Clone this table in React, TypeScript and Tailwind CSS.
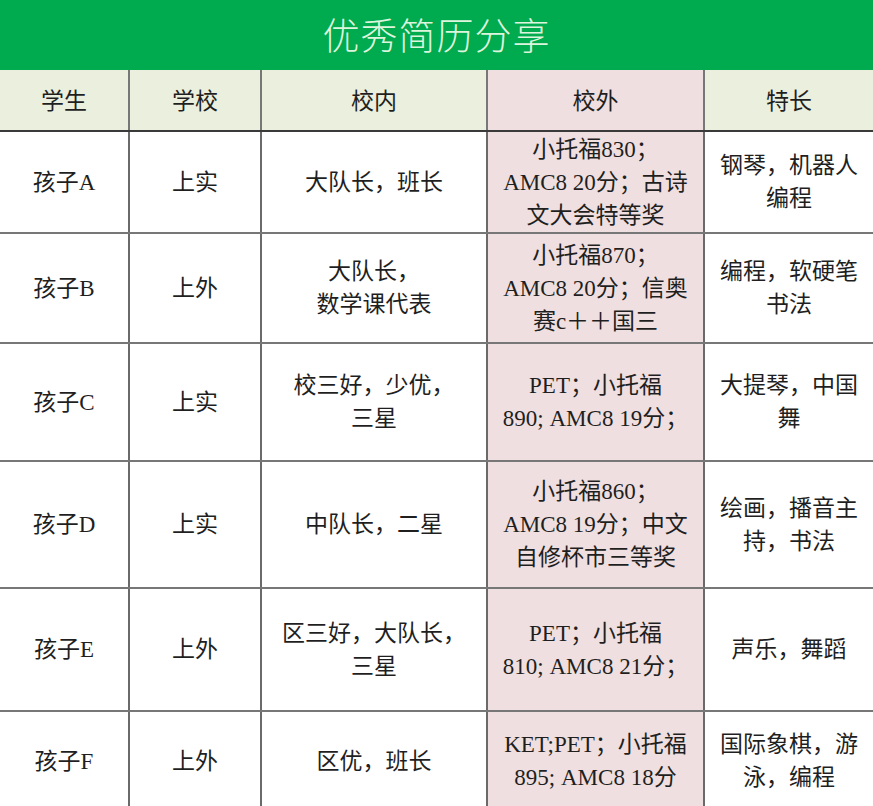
import React from "react";

const rows: { h: string; cells: React.ReactNode[] }[] = [
  {
    h: "h-[102px]",
    cells: [
      "孩子A",
      "上实",
      "大队长，班长",
      <>小托福830；<br />AMC8 20分；古诗<br />文大会特等奖</>,
      <>钢琴，机器人<br />编程</>,
    ],
  },
  {
    h: "h-[110px]",
    cells: [
      "孩子B",
      "上外",
      <>大队长，<br />数学课代表</>,
      <>小托福870；<br />AMC8 20分；信奥<br />赛c＋＋国三</>,
      <>编程，软硬笔<br />书法</>,
    ],
  },
  {
    h: "h-[118px]",
    cells: [
      "孩子C",
      "上实",
      <>校三好，少优，<br />三星</>,
      <>PET；小托福<br />890; AMC8 19分；</>,
      <>大提琴，中国<br />舞</>,
    ],
  },
  {
    h: "h-[127px]",
    cells: [
      "孩子D",
      "上实",
      "中队长，二星",
      <>小托福860；<br />AMC8 19分；中文<br />自修杯市三等奖</>,
      <>绘画，播音主<br />持，书法</>,
    ],
  },
  {
    h: "h-[123px]",
    cells: [
      "孩子E",
      "上外",
      <>区三好，大队长，<br />三星</>,
      <>PET；小托福<br />810; AMC8 21分；</>,
      "声乐，舞蹈",
    ],
  },
  {
    h: "h-[100px]",
    cells: [
      "孩子F",
      "上外",
      "区优，班长",
      <>KET;PET；小托福<br />895; AMC8 18分</>,
      <>国际象棋，游<br />泳，编程</>,
    ],
  },
];

const cols = "grid grid-cols-[130px_132px_226px_217px_1fr]";

export default function App() {
  return (
    <div
      className="w-[873px] h-[806px] overflow-hidden bg-white text-[#1f1f1f]"
      style={{ fontFamily: '"Liberation Serif", "Noto Sans CJK SC", serif' }}
    >
      <div className="h-[70px] bg-[#00aa4f] flex items-center justify-center">
        <span
          className="text-[37px] text-[#dcf5dc] tracking-[1px] font-light"
          style={{ fontFamily: '"Noto Sans CJK SC", sans-serif' }}
        >
          优秀简历分享
        </span>
      </div>
      <div className={`${cols} h-[62px] border-b-2 border-[#3a3a3a] text-[23px]`}>
        {["学生", "学校", "校内", "校外", "特长"].map((t, i) => (
          <div
            key={t}
            className={`flex items-center justify-center pt-1 ${i === 3 ? "bg-[#f0dfe0]" : "bg-[#ebefde]"} ${i < 4 ? "border-r-2 border-[#777]" : ""}`}
          >
            {t}
          </div>
        ))}
      </div>
      {rows.map((r, ri) => (
        <div
          key={ri}
          className={`${cols} ${r.h} border-b-2 border-[#777] text-[23px] leading-[33px]`}
        >
          {r.cells.map((c, i) => (
            <div
              key={i}
              className={`flex items-center justify-center text-center whitespace-nowrap ${i === 3 ? "bg-[#f0dfe0]" : "bg-white"} ${i < 4 ? "border-r-2 border-[#6a6a6a]" : ""}`}
            >
              <div>{c}</div>
            </div>
          ))}
        </div>
      ))}
    </div>
  );
}
